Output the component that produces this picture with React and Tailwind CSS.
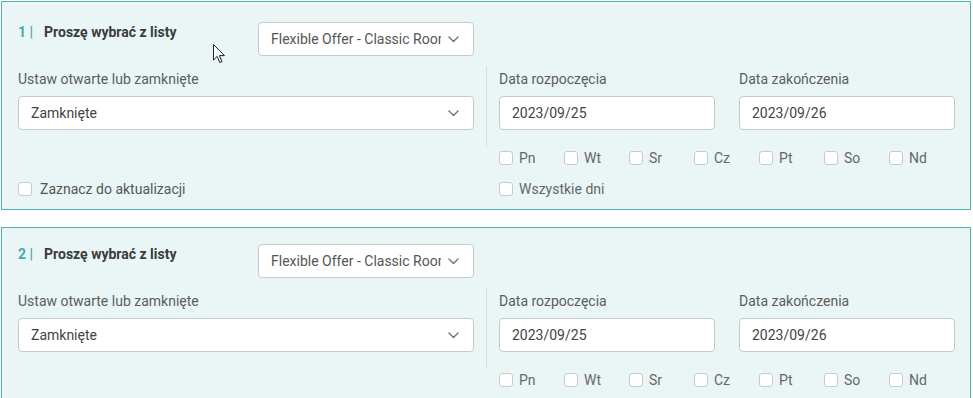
import { useState } from 'react'

const days = ['Pn', 'Wt', 'Sr', 'Cz', 'Pt', 'So', 'Nd']

const Chevron = () => (
  <svg width="11" height="7" viewBox="0 0 11 7" fill="none" className="shrink-0">
    <polyline points="1,1 5.5,5.5 10,1" stroke="#7b6a78" strokeWidth="1.4" strokeLinecap="round" strokeLinejoin="round" />
  </svg>
)

const Check = ({ label, textClass = 'text-[#666]', gap = 'ml-[6px]' }) => {
  const [on, setOn] = useState(false)
  return (
    <label className="flex items-center h-[18px] cursor-pointer" onClick={() => setOn(!on)}>
      <span
        className={`w-[14px] h-[14px] rounded-[3px] border border-[#c9c9c9] shrink-0 ${on ? 'bg-[#4fb3b0]' : 'bg-white'}`}
      />
      <span className={`${gap} text-[14px] leading-[18px] ${textClass}`}>{label}</span>
    </label>
  )
}

const Field = ({ children, className = '' }) => (
  <div
    className={`h-[34px] bg-white border border-[#c8c8c8] rounded-[4px] flex items-center pl-[12px] pr-[14px] text-[14px] text-[#444] ${className}`}
  >
    {children}
  </div>
)

const Section = ({ index, top }) => (
  <div className={`w-[970px] border border-[#4fb3b0] bg-[#eaf6f6] pl-4 pb-[11px] ${top}`}>
    {/* header */}
    <div className="flex items-start w-[456px]">
      <div className="w-[240px] pt-px flex items-center h-[18px] text-[14px] leading-[18px] font-bold">
        <span className="text-[#48a9a6]">{index} |</span>
        <span className="ml-[11px] text-[#3b3b3b]">Proszę wybrać z listy</span>
      </div>
      <Field className="w-[216px] justify-between">
        <span className="w-[170px] overflow-hidden whitespace-nowrap text-[#555]">Flexible Offer - Classic Room</span>
        <Chevron />
      </Field>
    </div>

    {/* open/closed + dates */}
    <div className="flex mt-[10px]">
      <div className="w-[456px] pt-1 pb-[17px]">
        <p className="text-[14px] leading-[18px] text-[#5c5c5c]">Ustaw otwarte lub zamknięte</p>
        <Field className="mt-2 justify-between">
          <span>Zamknięte</span>
          <Chevron />
        </Field>
      </div>
      <div className="w-px bg-[#d6dddd] mx-3" />
      <div className="w-[456px] pt-1 pb-[17px] flex gap-6">
        <div className="w-[216px]">
          <p className="text-[14px] leading-[18px] text-[#5c5c5c]">Data rozpoczęcia</p>
          <Field className="mt-2">2023/09/25</Field>
        </div>
        <div className="w-[216px]">
          <p className="text-[14px] leading-[18px] text-[#5c5c5c]">Data zakończenia</p>
          <Field className="mt-2">2023/09/26</Field>
        </div>
      </div>
    </div>

    {/* days */}
    <div className="flex mt-[2px]">
      <div className="w-[481px]" />
      <div className="flex">
        {days.map((d) => (
          <div key={d} className="w-[65px]">
            <Check label={d} />
          </div>
        ))}
      </div>
    </div>

    {/* bottom row */}
    <div className="flex mt-[13px]">
      <div className="w-[481px]">
        <Check label="Zaznacz do aktualizacji" textClass="text-[#555]" gap="ml-[8px]" />
      </div>
      <Check label="Wszystkie dni" />
    </div>
  </div>
)

export default function App() {
  return (
    <div className="relative p-px bg-white h-[398px] overflow-hidden font-['Roboto','Liberation_Sans',sans-serif]">
      <Section index={1} top="pt-[20px]" />
      <div className="mt-[17px]">
        <Section index={2} top="pt-[16px]" />
      </div>
      {/* mouse pointer */}
      <svg className="absolute left-[213px] top-[44px]" width="13" height="20" viewBox="0 0 13 20">
        <path d="M0.5 0.5 L0.5 16 L4.2 12.4 L6.8 18.6 L9 17.6 L6.4 11.6 L11.5 11.6 Z" fill="white" stroke="#222" strokeWidth="1" strokeLinejoin="round" />
      </svg>
    </div>
  )
}
